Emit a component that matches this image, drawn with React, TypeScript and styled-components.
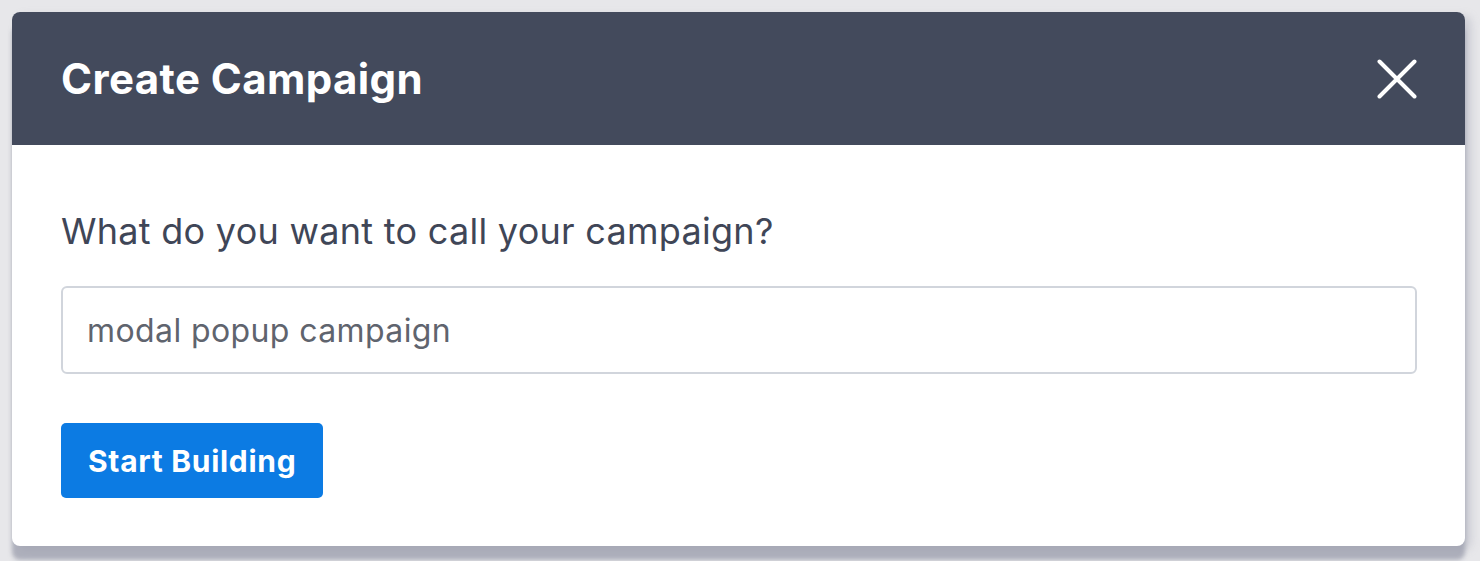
import React from "react";
import styled, { createGlobalStyle } from "styled-components";

const GlobalStyle = createGlobalStyle`
  html, body {
    margin: 0;
    padding: 0;
    background: #e7e7ea;
  }
  body {
    font-family: Inter, "Noto Sans", "Liberation Sans", sans-serif;
  }
`;

const Backdrop = styled.div`
  width: 1480px;
  height: 561px;
  box-sizing: border-box;
  padding: 12px 15px 0 12px;
  background: #e7e7ea;
  overflow: hidden;
`;

const Modal = styled.div`
  width: 1453px;
  border-radius: 8px;
  background: #ffffff;
  overflow: hidden;
  box-shadow: 0 14px 4px rgba(150, 152, 168, 0.7), 6px 4px 8px rgba(150, 152, 168, 0.35);
`;

const ModalHeader = styled.header`
  height: 133px;
  display: flex;
  align-items: center;
  justify-content: space-between;
  padding: 0 48px 0 49px;
  background: #434a5c;
`;

const ModalTitle = styled.h1`
  margin: 0;
  color: #ffffff;
  font-size: 42px;
  font-weight: 700;
  letter-spacing: 0.4px;
`;

const CloseButton = styled.button`
  width: 40px;
  height: 40px;
  padding: 0;
  border: none;
  background: transparent;
  display: flex;
  align-items: center;
  justify-content: center;
  cursor: pointer;
`;

const ModalBody = styled.main`
  display: flex;
  flex-direction: column;
  align-items: flex-start;
  padding: 64px 48px 48px 49px;
`;

const Question = styled.label`
  color: #3f4657;
  font-size: 36px;
  line-height: 44px;
  font-weight: 400;
  letter-spacing: 0.28px;
`;

const NameInput = styled.input`
  box-sizing: border-box;
  width: 100%;
  height: 88px;
  margin-top: 33px;
  padding: 0 24px;
  border: 2px solid #d1d5dc;
  border-radius: 6px;
  font-family: inherit;
  font-size: 32px;
  letter-spacing: 0.4px;
  color: #5f646e;
  outline: none;
`;

const PrimaryButton = styled.button`
  margin-top: 49px;
  height: 75px;
  padding: 0 27px;
  border: none;
  border-radius: 5px;
  background: #0c7be3;
  color: #ffffff;
  font-family: inherit;
  font-size: 30px;
  font-weight: 700;
  letter-spacing: 0.7px;
  cursor: pointer;
`;

const CloseIcon: React.FC = () => (
  <svg width="40" height="40" viewBox="0 0 40 40">
    <path
      d="M2.5 2.5 L37.5 37.5 M37.5 2.5 L2.5 37.5"
      stroke="#ffffff"
      strokeWidth="4"
      strokeLinecap="round"
    />
  </svg>
);

const App: React.FC = () => {
  return (
    <>
      <GlobalStyle />
      <Backdrop>
        <Modal>
          <ModalHeader>
            <ModalTitle>Create Campaign</ModalTitle>
            <CloseButton aria-label="Close">
              <CloseIcon />
            </CloseButton>
          </ModalHeader>
          <ModalBody>
            <Question htmlFor="campaign-name">
              What do you want to call your campaign?
            </Question>
            <NameInput id="campaign-name" defaultValue="modal popup campaign" />
            <PrimaryButton>Start Building</PrimaryButton>
          </ModalBody>
        </Modal>
      </Backdrop>
    </>
  );
};

export default App;
